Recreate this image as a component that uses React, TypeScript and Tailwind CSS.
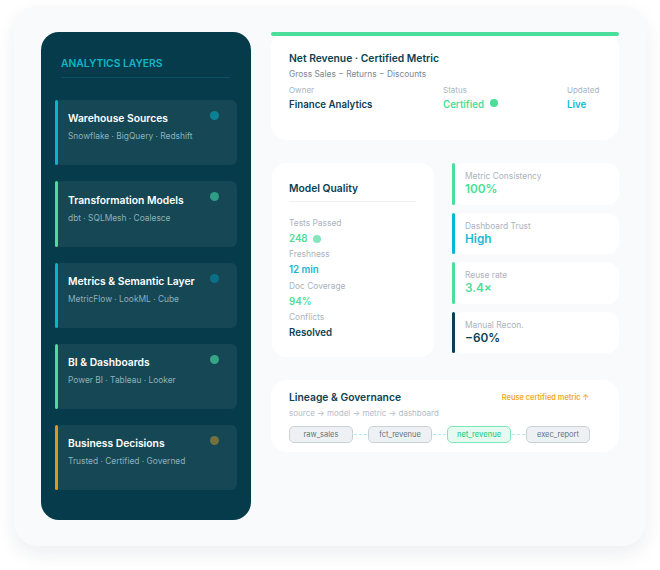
const LAYERS = [
  { title: 'Warehouse Sources', sub: 'Snowflake · BigQuery · Redshift', bar: 'bg-[#06b6c9]', dot: 'bg-[#0b8194]' },
  { title: 'Transformation Models', sub: 'dbt · SQLMesh · Coalesce', bar: 'bg-[#4ade9a]', dot: 'bg-[#2f9c84]' },
  { title: 'Metrics & Semantic Layer', sub: 'MetricFlow · LookML · Cube', bar: 'bg-[#06b6c9]', dot: 'bg-[#0b6f86]' },
  { title: 'BI & Dashboards', sub: 'Power BI · Tableau · Looker', bar: 'bg-[#4ade9a]', dot: 'bg-[#35a583]' },
  { title: 'Business Decisions', sub: 'Trusted · Certified · Governed', bar: 'bg-[#d99a1c]', dot: 'bg-[#75713f]' },
];

const KPIS = [
  { label: 'Metric Consistency', value: '100%', bar: 'bg-[#4ade9a]', color: 'text-[#4ade9a]' },
  { label: 'Dashboard Trust', value: 'High', bar: 'bg-[#06b6d4]', color: 'text-[#22b8d0]' },
  { label: 'Reuse rate', value: '3.4×', bar: 'bg-[#4ade9a]', color: 'text-[#4ade9a]' },
  { label: 'Manual Recon.', value: '−60%', bar: 'bg-[#0c3f52]', color: 'text-[#0c3f52]' },
];

const QUALITY = [
  { label: 'Tests Passed', value: '248', color: 'text-[#4ade9a]', dot: true },
  { label: 'Freshness', value: '12 min', color: 'text-[#14b8d0]', dot: false },
  { label: 'Doc Coverage', value: '94%', color: 'text-[#4ade9a]', dot: false },
  { label: 'Conflicts', value: 'Resolved', color: 'text-[#0c3f52]', dot: false },
];

const NODES = ['raw_sales', 'fct_revenue', 'net_revenue', 'exec_report'];

export default function App() {
  return (
    <div className="w-[660px] h-[570px] bg-white overflow-hidden font-['Inter',sans-serif] pt-[6px] px-[14px]">
      <div className="w-[632px] h-[540px] rounded-[24px] bg-[#f8fafc] shadow-[0_8px_20px_rgba(15,40,60,0.08)] pl-[27px] pr-[27px] pt-[26px] flex gap-[20px]">
        {/* Sidebar */}
        <div className="w-[210px] h-[488px] rounded-[18px] bg-[#053b4b] px-[14px] shrink-0">
          <div className="ml-[6px] mr-[7px] h-[46px] pt-[19px] border-b border-[#0c5063] text-[10.3px] leading-[24px] font-semibold text-[#12b5c9]">
            ANALYTICS LAYERS
          </div>
          <div className="mt-[22px] flex flex-col gap-[16px]">
            {LAYERS.map(l => (
              <div key={l.title} className="relative h-[65.25px] rounded-[6px] bg-[#154755] pl-[13px] pt-[11.4px]">
                <div className={`absolute left-0 top-0 bottom-0 w-[3px] rounded-[2px] ${l.bar}`} />
                <div className={`absolute right-[18px] top-[11px] w-[9px] h-[9px] rounded-full ${l.dot}`} />
                <div className="text-[10.3px] leading-[14px] font-semibold text-white">{l.title}</div>
                <div className="mt-[4px] text-[8.4px] leading-[14px] text-[#8fb0ba]">{l.sub}</div>
              </div>
            ))}
          </div>
        </div>

        {/* Right column */}
        <div className="w-[348px]">
          <div className="relative h-[108px] rounded-[16px] bg-white pt-[16px] px-[18px]">
            <div className="absolute left-0 right-0 top-0 h-[4px] rounded-[2px] bg-[#4ade9a]" />
            <div className="text-[10.3px] leading-[20px] font-semibold text-[#0c3f52]">Net Revenue · Certified Metric</div>
            <div className="text-[8.4px] leading-[14px] mt-[-1px] text-[#7b8794]">Gross Sales − Returns − Discounts</div>
            <div className="flex mt-[2px]">
              <div className="w-[154px]">
                <div className="text-[8px] leading-[14px] text-[#a9b4c0]">Owner</div>
                <div className="text-[9.7px] leading-[14px] mt-[1px] font-semibold text-[#0c3f52]">Finance Analytics</div>
              </div>
              <div className="w-[124px]">
                <div className="text-[8px] leading-[14px] text-[#a9b4c0]">Status</div>
                <div className="flex gap-[6px] text-[9.7px] leading-[14px] mt-[1px] font-semibold text-[#4ade9a]">
                  Certified
                  <span className="w-[8px] h-[8px] mt-[1px] rounded-full bg-[#4ade9a]" />
                </div>
              </div>
              <div>
                <div className="text-[8px] leading-[14px] text-[#a9b4c0]">Updated</div>
                <div className="text-[9.7px] leading-[14px] mt-[1px] font-semibold text-[#14b8d0]">Live</div>
              </div>
            </div>
          </div>

          <div className="mt-[23px] flex pl-[1px] gap-[18px]">
            <div className="w-[162px] h-[194px] rounded-[14px] bg-white pl-[17px] pr-[18px] pt-[17px]">
              <div className="h-[22px] border-b border-[#eef1f4] text-[10.3px] leading-[16px] font-semibold text-[#0c3f52]">Model Quality</div>
              <div className="mt-[13.6px] flex flex-col">
                {QUALITY.map(q => (
                  <div key={q.label} className="h-[31.6px]">
                    <div className="text-[8.4px] leading-[15px] text-[#a9b4c0]">{q.label}</div>
                    <div className={`flex items-center gap-[5px] text-[9.7px] leading-[16px] font-semibold ${q.color}`}>
                      {q.value}
                      {q.dot && <span className="w-[8px] h-[8px] rounded-full bg-[#86e5bd]" />}
                    </div>
                  </div>
                ))}
              </div>
            </div>

            <div className="w-[167px] flex flex-col gap-[8px]">
              {KPIS.map(k => (
                <div key={k.label} className="relative h-[41.5px] rounded-[12px] bg-white pl-[13px] pt-[7px]">
                  <div className={`absolute left-0 top-0 bottom-0 w-[3px] rounded-[2px] ${k.bar}`} />
                  <div className="text-[8.4px] leading-[12px] text-[#a9b4c0]">{k.label}</div>
                  <div className={`text-[11.8px] leading-[15px] font-semibold ${k.color}`}>{k.value}</div>
                </div>
              ))}
            </div>
          </div>

          <div className="mt-[23px] h-[72px] rounded-[16px] bg-white pl-[18px] pr-[30px] pt-[9px]">
            <div className="flex justify-between items-center h-[18px]">
              <div className="text-[10.3px] font-semibold text-[#0c3f52]">Lineage &amp; Governance</div>
              <div className="text-[7.4px] font-semibold text-[#f0a92e]">Reuse certified metric ↑</div>
            </div>
            <div className="mt-[-1px] text-[8px] leading-[14px] text-[#b3bcc8]">source → model → metric → dashboard</div>
            <div className="mt-[6px] flex items-center">
              {NODES.map((n, i) => (
                <div key={n} className="flex items-center">
                  {i > 0 && <div className="w-[13px] mx-[1px] border-t border-dashed border-[#b5ebf0]" />}
                  <div
                    className={`w-[64px] h-[17px] rounded-[5px] border text-center text-[7.5px] leading-[15px] ${
                      n === 'net_revenue'
                        ? 'border-[#7fe6b8] bg-[#e6faf1] text-[#2fcf8b] font-medium'
                        : 'border-[#c9d2d6] bg-[#eef1f3] text-[#5f7380]'
                    }`}
                  >
                    {n}
                  </div>
                </div>
              ))}
            </div>
          </div>
        </div>
      </div>
    </div>
  );
}
